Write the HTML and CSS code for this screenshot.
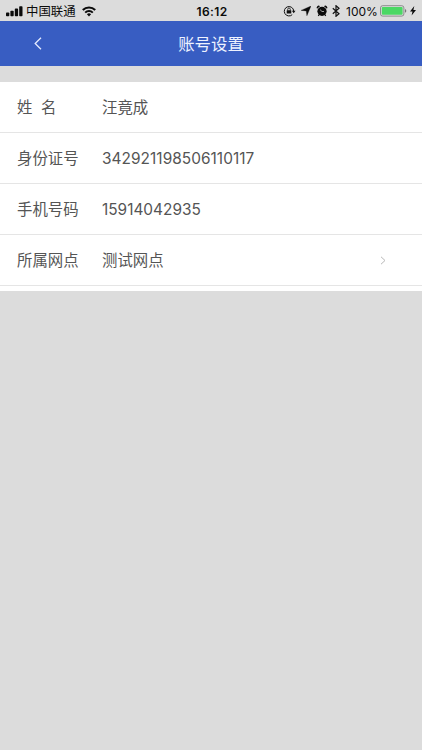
FILE: index.html
```html
<!DOCTYPE html>
<html lang="zh-CN">
<head>
<meta charset="utf-8">
<title>账号设置</title>
<link rel="stylesheet" href="styles.css">
</head>
<body>
<div class="status">
  <div class="status-left">
    <svg class="signal" width="17" height="11" viewBox="0 0 17 11"><rect x="0" y="6.5" width="3.3" height="3.7" rx=".8"/><rect x="4.4" y="4.7" width="3.3" height="5.5" rx=".8"/><rect x="8.8" y="2.6" width="3.3" height="7.6" rx=".8"/><rect x="13.2" y=".2" width="3.3" height="10" rx=".8"/></svg>
    <span class="carrier">中国联通</span>
    <svg class="wifi" width="14" height="11" viewBox="0 0 14 11" fill="none" stroke="#0b0b0b"><path d="M.8 4.1a8.8 8.8 0 0 1 12.4 0" stroke-width="2.1"/><path d="M3.2 6.6a5.4 5.4 0 0 1 7.6 0" stroke-width="2"/><path d="M7 10.5 4.9 8.3a3 3 0 0 1 4.2 0z" fill="#0b0b0b" stroke="none"/></svg>
  </div>
  <span class="time">16:12</span>
  <div class="status-right">
    <svg class="lock" width="13" height="12" viewBox="0 0 13 12" fill="none" stroke="#111"><path d="M9.2 9.7A4.7 4.7 0 1 1 10.7 6" stroke-width="1"/><path d="M8.9 5.8h3.6l-1.8 2.4z" fill="#111" stroke="none"/><rect x="3.7" y="5.3" width="4.6" height="3.3" rx=".4" fill="#111" stroke="none"/><path d="M4.7 5.5V4.3a1.3 1.3 0 0 1 2.6 0v1.2" stroke-width=".8"/></svg>
    <svg class="arrow" width="10" height="10" viewBox="0 0 10 10"><path d="M10 0 5.9 9.8 5.2 4.9 0 4.4z" stroke="#0b0b0b" stroke-width=".3"/></svg>
    <svg class="alarm" width="12" height="12" viewBox="0 0 12 12"><circle cx="6" cy="6.3" r="4.6"/><path d="M1 3.8A2 2 0 0 1 4 1.2zM11 3.8A2 2 0 0 0 8 1.2zM2.5 9.3l1 1-.7.9-1-.7zM9.5 9.3l-1 1 .7.9 1-.7z"/><path d="M4 4.6 6 6.5h2" fill="none" stroke="#dcdcdc" stroke-width=".7"/></svg>
    <svg class="bluetooth" width="8" height="12" viewBox="0 0 8 12" fill="none" stroke="#111" stroke-width="1.2"><path d="M.8 3.2 7 8.7 4 11.3V.7l3 2.6L.8 8.8"/></svg>
    <span class="percent">100%</span>
    <svg class="battery" width="27" height="12" viewBox="0 0 27 12"><rect x=".5" y=".7" width="23.4" height="10.4" rx="2.2" fill="none" stroke="#777" stroke-width=".8"/><rect x="1.8" y="2" width="20.8" height="7.8" rx="1" fill="#4bd864"/><path d="M25 4.1q1.3.5 1.3 1.8T25 7.7z" fill="#777"/></svg>
    <svg class="bolt" width="6" height="10" viewBox="0 0 6 10"><path d="M4.3 0 0 5.5h2.5L1.6 9.6 6 3.9H3.4z"/></svg>
  </div>
</div>
<header class="nav">
  <svg class="back" width="8" height="13" viewBox="0 0 8 13"><path d="M7 .8 1.2 6.5 7 12.2"/></svg>
  <h1>账号设置</h1>
</header>
<main class="list">
  <div class="row"><span class="label">姓&nbsp; 名</span><span class="value">汪竟成</span></div>
  <div class="row"><span class="label">身份证号</span><span class="value number">342921198506110117</span></div>
  <div class="row"><span class="label">手机号码</span><span class="value">15914042935</span></div>
  <div class="row"><span class="label">所属网点</span><span class="value">测试网点</span><svg class="chevron" width="6" height="9" viewBox="0 0 6 9"><path d="M1 .8 5 4.5 1 8.2"/></svg></div>
</main>
</body>
</html>
```
FILE: styles.css
```css
* { box-sizing: border-box; }
body {
  margin: 0;
  min-height: 750px;
  background: #dcdcdc;
  color: #555;
  font-family: Inter, "Noto Sans CJK SC", sans-serif;
}
svg { display: block; flex: none; }
.status {
  display: grid;
  grid-template-columns: 1fr 40px 1fr;
  height: 21px;
  color: #0b0b0b;
  fill: #0b0b0b;
  line-height: 21px;
}
.status-left, .status-right { display: flex; align-items: center; white-space: nowrap; }
.status-left { padding-left: 6px; }
.carrier { width: 50px; margin: 1px 6px 0 3px; font-size: 12.4px; line-height: 20px; padding-top: 1px; }
.time { padding: 1px 0 0 2px; text-align: center; font-size: 12px; font-weight: 600; letter-spacing: .4px; line-height: 21px; }
.status-right { justify-content: flex-end; padding-right: 6px; }
.lock { margin-right: 1px; }
.arrow { margin-left: 4px; }
.alarm { margin-left: 5px; }
.bluetooth { margin-left: 4px; }
.percent { width: 31px; margin: 1px 3px 0 6px; font-size: 12px; }
.bolt { margin-left: 3px; }
.nav {
  display: grid;
  grid-template-columns: 34px 1fr 34px;
  align-items: center;
  height: 45px;
  background: #385dc2;
  color: #eef2ff;
}
.back { margin-left: 34px; fill: none; stroke: #e5ebff; stroke-width: 1.3; }
.nav h1 { margin: 0; text-align: center; font-size: 16.4px; font-weight: 400; line-height: 24px; }
.list { margin-top: 16px; padding-bottom: 5px; background: #fff; }
.row {
  display: flex;
  align-items: center;
  height: 51px;
  padding: 0 36px 0 17px;
  border-bottom: 1px solid #e5e5e5;
  font-size: 15.4px;
  line-height: 24px;
}
.label { width: 85px; flex: none; padding-top: 2px; }
.value { flex: 1; padding-top: 2px; }
.number { letter-spacing: .05px; }
.chevron { fill: none; stroke: #b8b8b8; stroke-width: 1; }
```
